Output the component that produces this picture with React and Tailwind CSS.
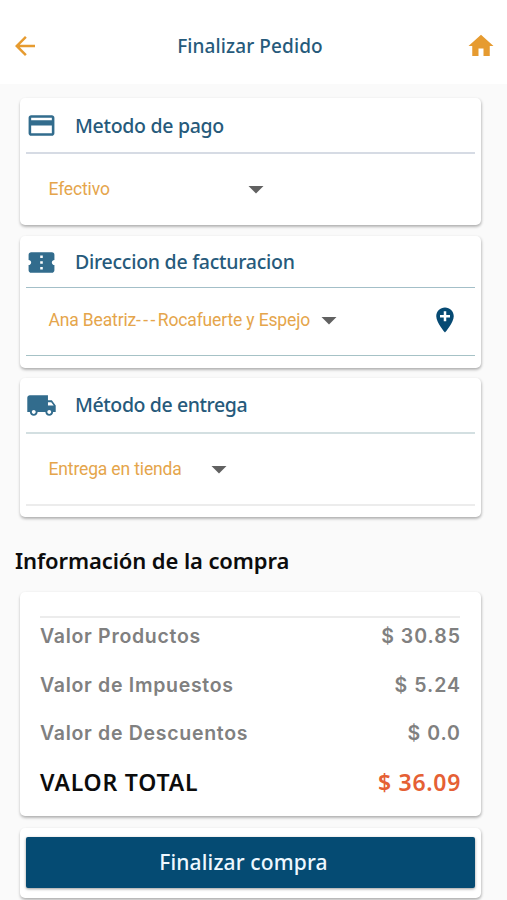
import {
  MdArrowBack,
  MdHome,
  MdCreditCard,
  MdConfirmationNumber,
  MdLocalShipping,
  MdAddLocation,
  MdArrowDropDown,
} from 'react-icons/md';
import clsx from 'clsx';

const heading = "font-['Noto_Sans','Open_Sans',sans-serif]";

function Card({ className, children }) {
  return (
    <section
      className={clsx(
        'mx-auto flex w-[461px] shrink-0 flex-col rounded-[5px] bg-white px-[6px] shadow-[0_2px_3px_rgba(0,0,0,0.22),1px_1px_3px_rgba(0,0,0,0.12)]',
        className,
      )}
    >
      {children}
    </section>
  );
}

function CardTitle({ icon: Icon, title, tracking, className }) {
  return (
    <div className={clsx('flex shrink-0 items-center', className)}>
      <Icon className="-ml-[0.5px] size-[31px] shrink-0 text-[#326c8d]" />
      <h2 className={clsx(heading, 'ml-[18.5px] text-[19.5px] leading-6 font-[480] whitespace-nowrap text-[#265a7b]', tracking)}>
        {title}
      </h2>
    </div>
  );
}

function Select({ children, width }) {
  return (
    <button className={clsx('flex items-center justify-between', width)}>
      <span className="font-['Roboto',sans-serif] text-[17.5px] leading-6 tracking-[-0.15px] whitespace-nowrap text-[#e5a54b]">
        {children}
      </span>
      <MdArrowDropDown className="size-[36px] shrink-0 text-[#616161]" />
    </button>
  );
}

function Amount({ label, value }) {
  return (
    <div className="flex h-[48.5px] items-center justify-between font-['Inter',sans-serif] text-[19.5px] leading-6 font-semibold text-[#808080]">
      <span className="tracking-[0.7px]">{label}</span>
      <span className="-mr-px tracking-[1px]">{value}</span>
    </div>
  );
}

export default function App() {
  return (
    <main className="flex h-[900px] w-[507px] flex-col overflow-hidden bg-[#fafafa]">
      <header className="flex h-[84px] shrink-0 items-center justify-between bg-white pt-2 pr-[11px] pl-[10px]">
        <MdArrowBack className="size-[30px] text-[#e69b30]" />
        <h1 className={clsx(heading, 'mr-[6px] text-[19px] leading-6 font-medium tracking-[0.1px] text-[#265a7b]')}>
          Finalizar Pedido
        </h1>
        <MdHome className="size-[30px] text-[#e69b30]" />
      </header>

      <div className="flex shrink-0 flex-col pr-[6px]">
        <Card className="mt-[14px] h-[127px]">
          <CardTitle
            icon={MdCreditCard}
            title="Metodo de pago"
            tracking="tracking-[-0.3px]"
            className="h-[56px] border-b-2 border-[#d6dbe4] pt-px"
          />
          <div className="flex h-[70px] items-center pl-[22.5px]">
            <Select width="w-[225px]">Efectivo</Select>
          </div>
        </Card>

        <Card className="mt-[11px] h-[132px]">
          <CardTitle
            icon={MdConfirmationNumber}
            title="Direccion de facturacion"
            tracking="tracking-[-0.26px]"
            className="h-[52px] border-b border-[#a3bfc8] pt-px"
          />
          <div className="flex h-[68px] items-center justify-between border-b border-[#a6c2c6] pr-[15px] pb-[4px] pl-[22.5px]">
            <Select width="w-[298px]">
              Ana Beatriz<span className="tracking-[2.4px]">---</span>Rocafuerte y Espejo
            </Select>
            <MdAddLocation className="size-[30px] text-[#064a73]" />
          </div>
        </Card>

        <Card className="mt-[10px] h-[139px]">
          <CardTitle
            icon={MdLocalShipping}
            title="Método de entrega"
            tracking="tracking-[-0.4px]"
            className="h-[56px] border-b-2 border-[#d3dfe1]"
          />
          <div className="flex h-[72px] items-center border-b-2 border-[#ececec] pl-[22.5px]">
            <Select width="w-[188px]">Entrega en tienda</Select>
          </div>
        </Card>

        <h2
          className={clsx(
            heading,
            'mt-[28px] ml-[15px] h-[30px] text-[22px] leading-[30px] font-semibold tracking-[-0.1px] whitespace-nowrap text-[#0c0c0c]',
          )}
        >
          Información de la compra
        </h2>

        <Card className="mt-[17px] h-[224px]">
          <div className="mt-[24px] mr-[15px] ml-[14px] border-t-2 border-[#ececec]">
            <div className="-mt-[6px]">
              <Amount label="Valor Productos" value="$ 30.85" />
              <Amount label="Valor de Impuestos" value="$ 5.24" />
              <Amount label="Valor de Descuentos" value="$ 0.0" />
            </div>
            <div className={clsx(heading, 'flex h-[49px] items-center justify-between text-[23px] leading-[30px] font-semibold')}>
              <span className="tracking-[0.8px] text-[#0c0c0c]">VALOR TOTAL</span>
              <span className="-mr-px tracking-[0.7px] text-[#e56034]">$ 36.09</span>
            </div>
          </div>
        </Card>

        <Card className="mt-[12px] h-[70px] pt-[9px]">
          <button
            className={clsx(
              heading,
              'h-[51px] rounded-[2px] bg-[#054b73] pr-[14px] text-[21px] font-medium tracking-[0.15px] text-[#eef8ff] shadow-[0_1px_3px_rgba(0,0,0,0.4)]',
            )}
          >
            Finalizar compra
          </button>
        </Card>
      </div>
    </main>
  );
}
